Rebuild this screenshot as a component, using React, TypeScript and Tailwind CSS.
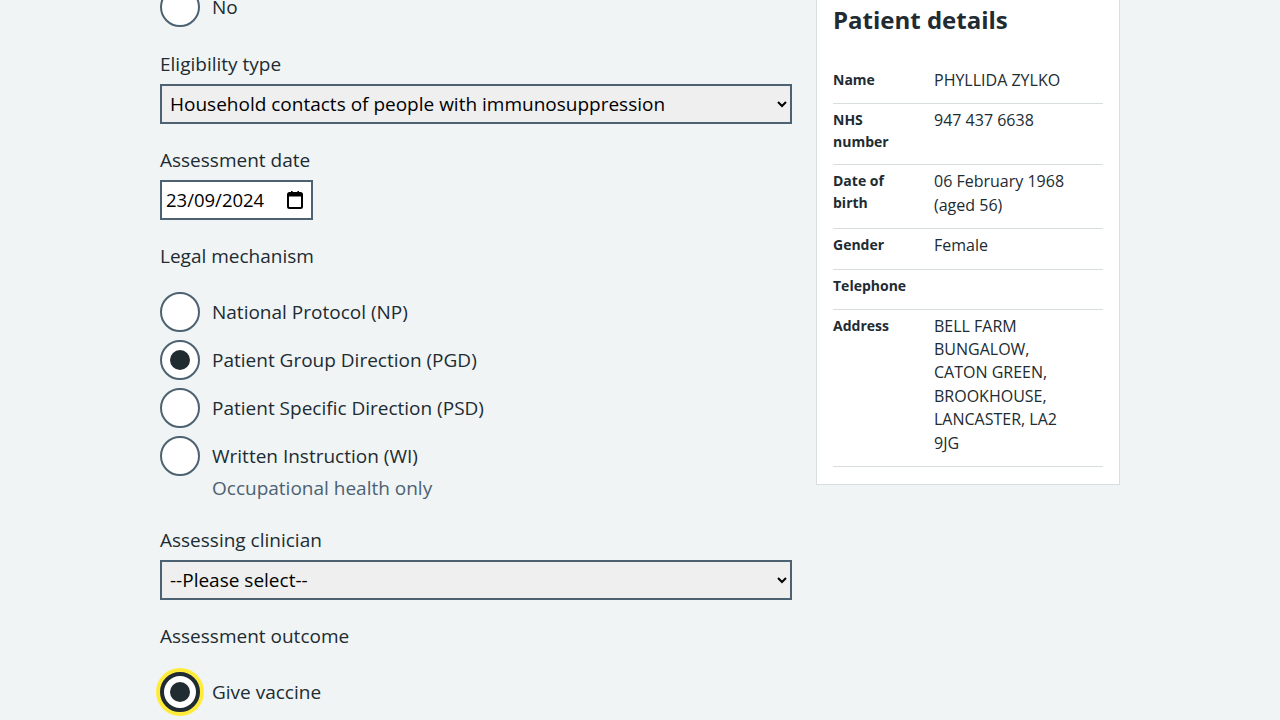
import React from "react";

function Radio({
  label,
  checked = false,
  focused = false,
  hint,
}: {
  label: string;
  checked?: boolean;
  focused?: boolean;
  hint?: string;
}) {
  return (
    <div className="flex items-start">
      <span
        className={
          focused
            ? "flex h-10 w-10 shrink-0 items-center justify-center rounded-full border-4 border-[#212b32] bg-white shadow-[0_0_0_4px_#ffeb3b]"
            : "flex h-10 w-10 shrink-0 items-center justify-center rounded-full border-2 border-[#4c6272] bg-white"
        }
      >
        {checked && <span className="h-5 w-5 rounded-full bg-[#212b32]" />}
      </span>
      <div className="pl-3">
        <div className="text-[19px] leading-[40px]">{label}</div>
        {hint && <div className="text-[19px] leading-6 text-[#4c6272]">{hint}</div>}
      </div>
    </div>
  );
}

function CalendarIcon() {
  return (
    <svg width="16" height="18" viewBox="0 0 16 18" className="shrink-0">
      <rect x="4" y="0" width="1.6" height="3" fill="#000" />
      <rect x="10.4" y="0" width="1.6" height="3" fill="#000" />
      <rect x="1" y="2" width="14" height="15" rx="1.5" fill="none" stroke="#000" strokeWidth="2" />
      <rect x="1" y="2" width="14" height="3.5" fill="#000" />
    </svg>
  );
}

function Row({ k, v }: { k: React.ReactNode; v: React.ReactNode }) {
  return (
    <div className="grid grid-cols-[101px_1fr] border-b border-[#d8dde0] pt-[5px] pb-[11px]">
      <dt className="text-[14px] font-bold leading-[22px]">{k}</dt>
      <dd className="min-h-[23px] text-[16px] leading-[23.4px]">{v}</dd>
    </div>
  );
}

export default function App() {
  return (
    <div className="min-h-screen overflow-hidden bg-[#f0f4f5] font-['Open_Sans',sans-serif] text-[#212b32]">
      <div className="mx-auto -mt-[13px] flex w-[960px] items-start gap-6">
        {/* Left column */}
        <div className="w-[632px]">
          <Radio label="No" />

          <div className="mt-[23px]">
            <label className="mb-[6px] block text-[19px] leading-7">Eligibility type</label>
            <select
              defaultValue="household"
              className="block h-10 w-full border-2 border-[#4c6272] bg-[#efefef] pl-1 text-[19px] text-black"
              style={{ fontFamily: "'Open Sans', sans-serif" }}
            >
              <option value="household">Household contacts of people with immunosuppression</option>
            </select>
          </div>

          <div className="mt-[22px]">
            <label className="mb-[6px] block text-[19px] leading-7">Assessment date</label>
            <div className="flex h-10 w-[153px] items-center justify-between border-2 border-[#4c6272] bg-white pl-1 pr-2">
              <span className="text-[18.5px] leading-none text-black">23/09/2024</span>
              <CalendarIcon />
            </div>
          </div>

          <fieldset className="mt-[22px]">
            <legend className="mb-[22px] block text-[19px] leading-7">Legal mechanism</legend>
            <div className="flex flex-col gap-2">
              <Radio label="National Protocol (NP)" />
              <Radio label="Patient Group Direction (PGD)" checked />
              <Radio label="Patient Specific Direction (PSD)" />
              <Radio label="Written Instruction (WI)" hint="Occupational health only" />
            </div>
          </fieldset>

          <div className="mt-[26px]">
            <label className="mb-[6px] block text-[19px] leading-7">Assessing clinician</label>
            <select
              defaultValue=""
              className="block h-10 w-full border-2 border-[#4c6272] bg-[#efefef] pl-1 text-[19px] text-black"
              style={{ fontFamily: "'Open Sans', sans-serif" }}
            >
              <option value="">--Please select--</option>
            </select>
          </div>

          <fieldset className="mt-[22px]">
            <legend className="mb-[22px] block text-[19px] leading-7">Assessment outcome</legend>
            <Radio label="Give vaccine" checked focused />
          </fieldset>
        </div>

        {/* Right column */}
        <div className="w-[304px] border border-[#d8dde0] bg-white px-4 pt-4 pb-[17px]">
          <h2 className="mb-[28px] text-[24px] font-bold leading-8">Patient details</h2>
          <dl>
            <Row k="Name" v="PHYLLIDA ZYLKO" />
            <Row
              k={
                <>
                  NHS
                  <br />
                  number
                </>
              }
              v="947 437 6638"
            />
            <Row
              k={
                <>
                  Date of
                  <br />
                  birth
                </>
              }
              v={
                <>
                  06 February 1968
                  <br />
                  (aged 56)
                </>
              }
            />
            <Row k="Gender" v="Female" />
            <Row k="Telephone" v="" />
            <Row
              k="Address"
              v={
                <>
                  BELL FARM
                  <br />
                  BUNGALOW,
                  <br />
                  CATON GREEN,
                  <br />
                  BROOKHOUSE,
                  <br />
                  LANCASTER, LA2
                  <br />
                  9JG
                </>
              }
            />
          </dl>
        </div>
      </div>
    </div>
  );
}
